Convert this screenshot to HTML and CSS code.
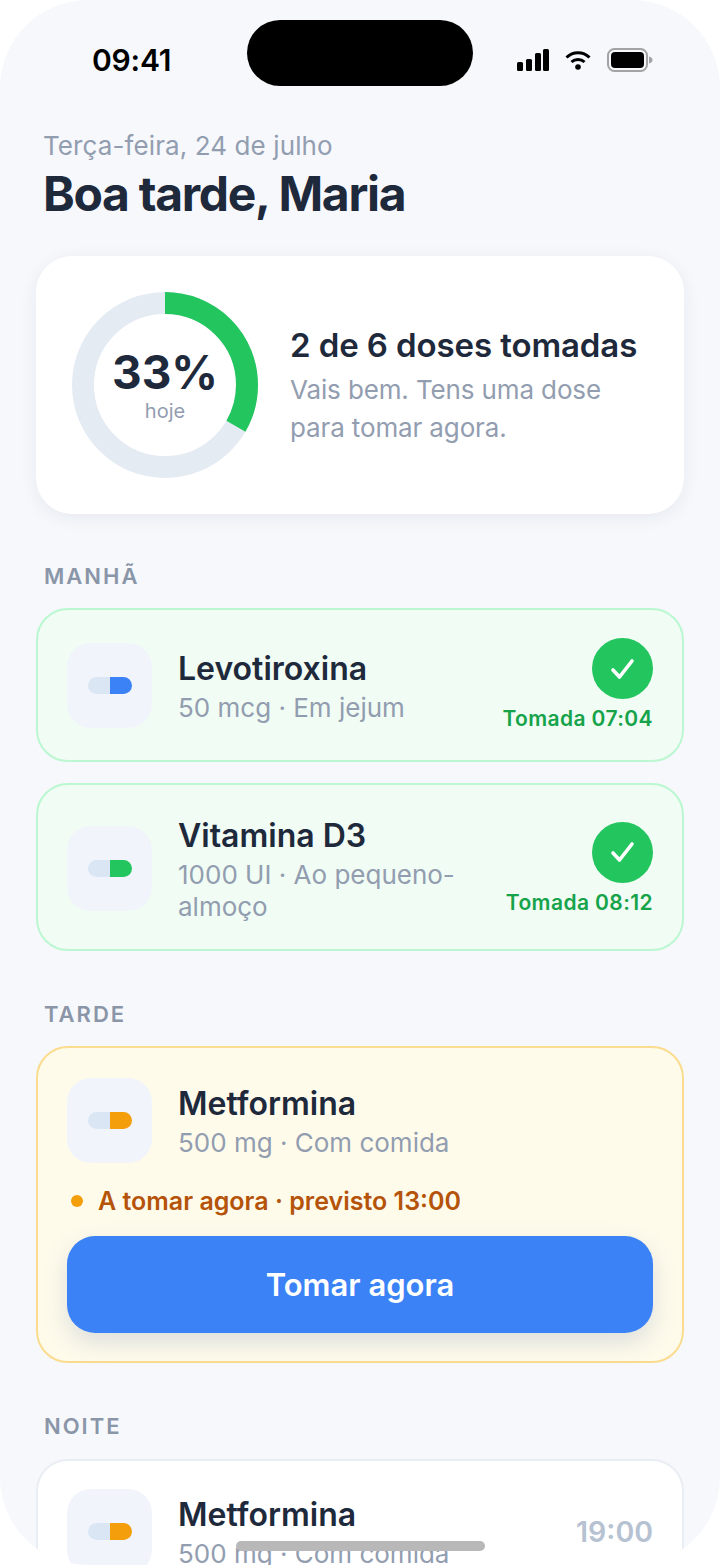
FILE: index.html
```html
<!DOCTYPE html>
<html lang="pt">

<head>
    <meta charset="UTF-8">
    <meta name="viewport" content="width=device-width, initial-scale=1.0">
    <title>Doses de hoje</title>
    <link rel="stylesheet" href="styles.css">
</head>

<body>
    <div class="screen">
        <div class="island"></div>
        <div class="statusbar">
            <span class="clock">09:41</span>
            <div class="status-icons">
                <svg class="ico-signal" width="32" height="22" viewBox="0 0 32 22">
                    <rect x="0" y="13" width="6" height="9" rx="1.5"></rect>
                    <rect x="9" y="10" width="6" height="12" rx="1.5"></rect>
                    <rect x="18" y="4" width="6" height="18" rx="1.5"></rect>
                    <rect x="26" y="0" width="6" height="22" rx="1.5"></rect>
                </svg>
                <svg class="ico-wifi" width="26" height="20" viewBox="0 0 26 20">
                    <path d="M1.5 7.5C8 1 18 1 24.5 7.5" fill="none" stroke="#000" stroke-width="3"></path>
                    <path d="M6.5 12C10 8.6 16 8.6 19.5 12" fill="none" stroke="#000" stroke-width="3"></path>
                    <circle cx="13" cy="17" r="2.8"></circle>
                </svg>
                <svg class="ico-battery" width="47" height="24" viewBox="0 0 47 24">
                    <rect x="1" y="1" width="39" height="22" rx="6.5" fill="none" stroke="#a3a3a3" stroke-width="2"></rect>
                    <rect x="4" y="4" width="33" height="16" rx="4"></rect>
                    <path d="M42 8.5c2 .4 3.5 1.6 3.5 3.5s-1.500 3.100-3.500 3.500z" fill="#a3a3a3"></path>
                </svg>
            </div>
        </div>

        <header class="head">
            <div class="date">Terça-feira, 24 de julho</div>
            <h1>Boa tarde, Maria</h1>
        </header>

        <section class="summary">
            <div class="ring">
                <svg width="186" height="186" viewBox="0 0 186 186">
                    <circle cx="93" cy="93" r="82" fill="none" stroke="#e5ebf3" stroke-width="22"></circle>
                    <circle cx="93" cy="93" r="82" fill="none" stroke="#22c55e" stroke-width="22"
                        stroke-dasharray="171.700 343.500" transform="rotate(-90 93 93)"></circle>
                </svg>
                <div class="ring-label">
                    <div class="pct">33%</div>
                    <div class="pct-sub">hoje</div>
                </div>
            </div>
            <div>
                <div class="summary-title">2 de 6 doses tomadas</div>
                <div class="summary-text">Vais bem. Tens uma dose para tomar agora.</div>
            </div>
        </section>

        <h2 class="period">MANHÃ</h2>
        <div class="dose done">
            <div class="row">
                <div class="tile"><span class="pill blue"></span></div>
                <div class="info">
                    <div class="name">Levotiroxina</div>
                    <div class="detail">50 mcg · Em jejum</div>
                </div>
                <div class="taken">
                    <div class="check">
                        <svg width="28" height="24" viewBox="0 0 28 24">
                            <path d="M4 13l6.500 7L23 4" fill="none" stroke="#fff" stroke-width="3.600" stroke-linecap="round" stroke-linejoin="round"></path>
                        </svg>
                    </div>
                    <div class="taken-time">Tomada 07:04</div>
                </div>
            </div>
        </div>
        <div class="dose done">
            <div class="row">
                <div class="tile"><span class="pill green"></span></div>
                <div class="info">
                    <div class="name">Vitamina D3</div>
                    <div class="detail">1000 UI · Ao pequeno-almoço</div>
                </div>
                <div class="taken">
                    <div class="check">
                        <svg width="28" height="24" viewBox="0 0 28 24">
                            <path d="M4 13l6.500 7L23 4" fill="none" stroke="#fff" stroke-width="3.600" stroke-linecap="round" stroke-linejoin="round"></path>
                        </svg>
                    </div>
                    <div class="taken-time">Tomada 08:12</div>
                </div>
            </div>
        </div>

        <h2 class="period">TARDE</h2>
        <div class="dose due">
            <div class="row">
                <div class="tile"><span class="pill amber"></span></div>
                <div class="info">
                    <div class="name">Metformina</div>
                    <div class="detail">500 mg · Com comida</div>
                </div>
            </div>
            <div class="due-note"><span class="dot"></span>A tomar agora · previsto 13:00</div>
            <button class="take">Tomar agora</button>
        </div>

        <h2 class="period">NOITE</h2>
        <div class="dose later">
            <div class="row">
                <div class="tile"><span class="pill amber"></span></div>
                <div class="info">
                    <div class="name">Metformina</div>
                    <div class="detail">500 mg · Com comida</div>
                </div>
                <div class="time">19:00</div>
            </div>
        </div>

        <div class="home-bar"></div>
    </div>
</body>

</html>
```

FILE: styles.css
```css
* {
    box-sizing: border-box;
}

html,
body {
    margin: 0;
    height: 100%;
    background: #fff;
}

body {
    font-family: Inter, "Noto Sans", sans-serif;
    color: #1e293b;
    overflow: hidden;
}

.screen {
    position: relative;
    width: 720px;
    height: 1565px;
    padding: 0 36px;
    background: #f6f8fc;
    border-radius: 88px;
    overflow: hidden;
}

.island {
    position: absolute;
    top: 20px;
    left: 247px;
    width: 226px;
    height: 66px;
    background: #000;
    border-radius: 33px;
}

.statusbar {
    display: flex;
    justify-content: space-between;
    align-items: center;
    height: 128px;
    padding: 0 30px 8px 56px;
    color: #000;
}

.clock {
    font-size: 30px;
    font-weight: 600;
    letter-spacing: -0.2px;
}

.status-icons {
    display: flex;
    align-items: center;
    gap: 16px;
}

.status-icons svg {
    display: block;
}

.head {
    padding-left: 7px;
}

.date {
    font-size: 26px;
    line-height: 36px;
    letter-spacing: 0.1px;
    color: #929db0;
}

h1 {
    margin: 2px 0 34px;
    font-size: 48px;
    line-height: 56px;
    font-weight: 700;
    letter-spacing: -1.3px;
}

.summary {
    display: flex;
    align-items: center;
    gap: 33px;
    height: 258px;
    padding: 0 36px;
    background: #fff;
    border-radius: 36px;
    box-shadow: 0 4px 18px rgba(30, 41, 59, 0.07);
}

.ring {
    position: relative;
    flex: none;
    width: 186px;
    height: 186px;
}

.ring svg {
    display: block;
}

.ring-label {
    position: absolute;
    top: 0;
    left: 0;
    right: 0;
    bottom: 0;
    display: flex;
    flex-direction: column;
    align-items: center;
    justify-content: center;
    padding-bottom: 2px;
}

.pct {
    font-size: 46px;
    line-height: 54px;
    font-weight: 700;
}

.pct-sub {
    font-size: 20px;
    line-height: 24px;
    color: #929db0;
}

.summary-title {
    font-size: 33px;
    line-height: 44px;
    font-weight: 600;
    letter-spacing: -0.1px;
    margin-left: -1px;
}

.summary-text {
    margin-top: 4px;
    margin-left: -1px;
    font-size: 26px;
    line-height: 38px;
    letter-spacing: -0.13px;
    color: #929db0;
}

.period {
    margin: 49px 8px 18px;
    font-size: 22px;
    line-height: 28px;
    font-weight: 600;
    letter-spacing: 2px;
    color: #8a96a8;
}

.summary + .period {
    margin-top: 48px;
}

.dose {
    padding: 28px 29px;
    border: 2px solid #e9edf4;
    border-radius: 32px;
    background: #fff;
}

.dose + .dose {
    margin-top: 21px;
    padding-top: 29px;
    padding-bottom: 26px;
}

.dose.done {
    background: #f0fcf4;
    border-color: #bbf7d0;
}

.dose.due {
    padding-top: 30px;
    background: #fffbeb;
    border-color: #fbdc8e;
}

.dose.later {
    margin-top: 19px;
}

.row {
    display: flex;
    align-items: center;
}

.tile {
    flex: none;
    display: flex;
    align-items: center;
    justify-content: center;
    width: 85px;
    height: 85px;
    margin-right: 26px;
    background: #f1f5fb;
    border-radius: 24px;
}

.pill {
    display: block;
    width: 44px;
    height: 17px;
    border-radius: 9px;
}

.pill.blue {
    background: linear-gradient(90deg, #dbe6f4 50%, #3b82f6 50%);
}

.pill.green {
    background: linear-gradient(90deg, #dbe6f4 50%, #22c55e 50%);
}

.pill.amber {
    background: linear-gradient(90deg, #dbe6f4 50%, #f59e0b 50%);
}

.info {
    flex: 1;
    min-width: 0;
}

.name {
    font-size: 32px;
    line-height: 44px;
    font-weight: 600;
}

.detail {
    margin-top: 1px;
    font-size: 26px;
    line-height: 32px;
    color: #929db0;
}

.taken {
    flex: none;
    display: flex;
    flex-direction: column;
    align-items: flex-end;
    gap: 7px;
    margin-left: 26px;
}

.check {
    display: flex;
    align-items: center;
    justify-content: center;
    width: 61px;
    height: 61px;
    background: #22c55e;
    border-radius: 50%;
}

.taken-time {
    font-size: 21px;
    line-height: 26px;
    font-weight: 600;
    letter-spacing: 0.4px;
    color: #16a34a;
}

.due-note {
    display: flex;
    align-items: center;
    margin-top: 21px;
    padding-left: 4px;
    font-size: 25px;
    line-height: 34px;
    font-weight: 600;
    color: #b45309;
}

.dot {
    flex: none;
    width: 12px;
    height: 12px;
    margin-right: 15px;
    background: #f59e0b;
    border-radius: 50%;
}

.take {
    display: block;
    width: 100%;
    height: 97px;
    margin-top: 18px;
    border: 0;
    border-radius: 28px;
    background: #3b82f6;
    color: #fff;
    font-family: inherit;
    font-size: 31px;
    font-weight: 600;
    box-shadow: 0 10px 24px rgba(59, 100, 160, 0.18);
}

.time {
    flex: none;
    font-size: 28.5px;
    font-weight: 600;
    color: #b6c2d2;
}

.home-bar {
    position: absolute;
    left: 236px;
    top: 1541px;
    width: 249px;
    height: 10px;
    background: #b8b8b8;
    border-radius: 5px;
}
```
